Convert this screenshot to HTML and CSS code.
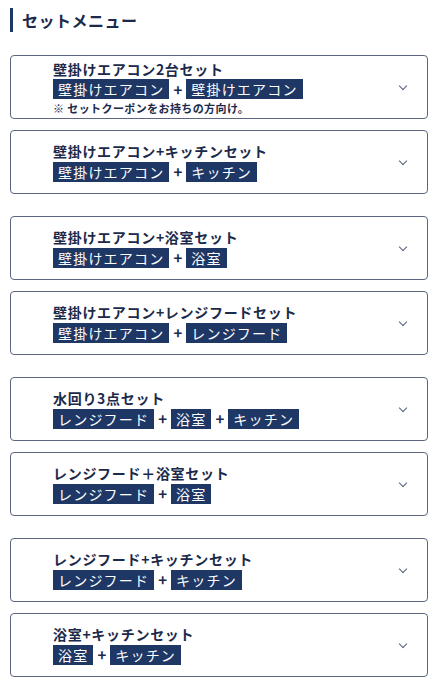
FILE: index.html
```html
<!DOCTYPE html>
<html lang="ja">
<head>
    <meta charset="UTF-8">
    <meta name="viewport" content="width=device-width, initial-scale=1.0">
    <title>セットメニュー</title>
    <link rel="stylesheet" href="styles.css">
</head>
<body>
    <div class="wrap">
        <h2 class="heading">セットメニュー</h2>

        <div class="group">
            <div class="card">
                <div class="info">
                    <p class="title">壁掛けエアコン2台セット</p>
                    <div class="tags"><span class="tag">壁掛けエアコン</span><span class="plus">+</span><span class="tag">壁掛けエアコン</span></div>
                    <p class="note">※ セットクーポンをお持ちの方向け。</p>
                </div>
                <span class="chev"></span>
            </div>
            <div class="card">
                <div class="info">
                    <p class="title">壁掛けエアコン+キッチンセット</p>
                    <div class="tags"><span class="tag">壁掛けエアコン</span><span class="plus">+</span><span class="tag">キッチン</span></div>
                </div>
                <span class="chev"></span>
            </div>
        </div>

        <div class="group">
            <div class="card">
                <div class="info">
                    <p class="title">壁掛けエアコン+浴室セット</p>
                    <div class="tags"><span class="tag">壁掛けエアコン</span><span class="plus">+</span><span class="tag">浴室</span></div>
                </div>
                <span class="chev"></span>
            </div>
            <div class="card">
                <div class="info">
                    <p class="title">壁掛けエアコン+レンジフードセット</p>
                    <div class="tags"><span class="tag">壁掛けエアコン</span><span class="plus">+</span><span class="tag">レンジフード</span></div>
                </div>
                <span class="chev"></span>
            </div>
        </div>

        <div class="group">
            <div class="card">
                <div class="info">
                    <p class="title">水回り3点セット</p>
                    <div class="tags"><span class="tag">レンジフード</span><span class="plus">+</span><span class="tag">浴室</span><span class="plus">+</span><span class="tag">キッチン</span></div>
                </div>
                <span class="chev"></span>
            </div>
            <div class="card">
                <div class="info">
                    <p class="title">レンジフード＋浴室セット</p>
                    <div class="tags"><span class="tag">レンジフード</span><span class="plus">+</span><span class="tag">浴室</span></div>
                </div>
                <span class="chev"></span>
            </div>
        </div>

        <div class="group">
            <div class="card">
                <div class="info">
                    <p class="title">レンジフード+キッチンセット</p>
                    <div class="tags"><span class="tag">レンジフード</span><span class="plus">+</span><span class="tag">キッチン</span></div>
                </div>
                <span class="chev"></span>
            </div>
            <div class="card">
                <div class="info">
                    <p class="title">浴室+キッチンセット</p>
                    <div class="tags"><span class="tag">浴室</span><span class="plus">+</span><span class="tag">キッチン</span></div>
                </div>
                <span class="chev"></span>
            </div>
        </div>
    </div>
</body>
</html>
```

FILE: styles.css
```css
body {
    margin: 0;
    padding: 0;
    background: #fff;
    font-family: "Noto Sans CJK JP", "Noto Sans", sans-serif;
    color: #1b2a4a;
}
.wrap {
    padding: 8px 9px 0 10px;
}
.heading {
    margin: 0 0 23px;
    padding-left: 9px;
    border-left: 3px solid #1e3765;
    font-size: 16px;
    font-weight: bold;
    line-height: 24px;
    letter-spacing: 0.5px;
}
.group {
    display: flex;
    flex-direction: column;
    gap: 11px;
    margin-bottom: 22px;
}
.card {
    display: flex;
    align-items: center;
    box-sizing: border-box;
    height: 64px;
    padding: 0 21px 0 42px;
    border: 1px solid #5d6681;
    border-radius: 4px;
}
.info {
    flex: 1;
}
.title {
    margin: 0;
    font-size: 14px;
    font-weight: bold;
    line-height: 18px;
    letter-spacing: 0.7px;
}
.tags {
    display: flex;
    align-items: center;
    margin-top: 1px;
}
.tag {
    display: inline-block;
    padding: 0 5px;
    background: #1e3765;
    color: #fff;
    font-size: 14px;
    line-height: 20px;
    letter-spacing: 1.2px;
}
.plus {
    margin: 0 4px;
    font-size: 15px;
    font-weight: bold;
}
.note {
    margin: 1px 0 0;
    font-size: 11px;
    font-weight: bold;
    line-height: 14px;
    letter-spacing: 0.4px;
}
.chev {
    width: 5px;
    height: 5px;
    border-right: 1px solid #55607a;
    border-bottom: 1px solid #55607a;
    transform: rotate(45deg);
    margin-top: -3px;
}
```
